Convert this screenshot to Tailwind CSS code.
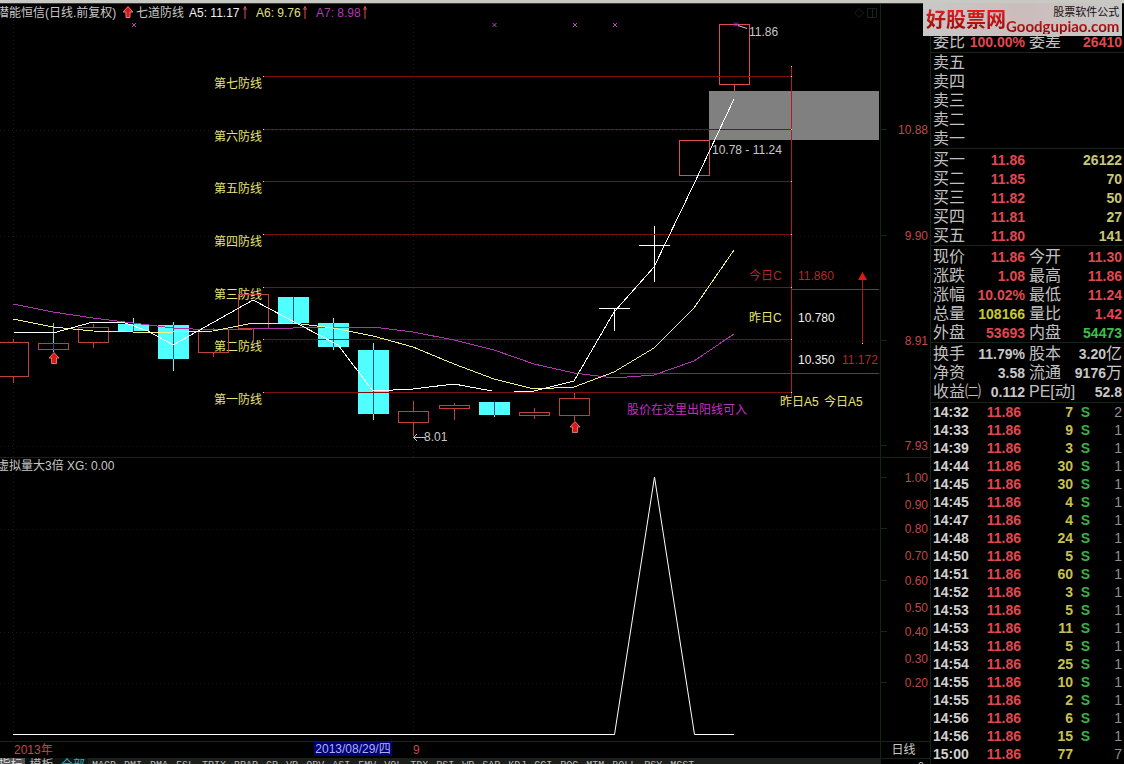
<!DOCTYPE html>
<html lang="zh-CN">
<head>
<meta charset="utf-8">
<meta name="viewport" content="width=device-width, initial-scale=1">
<title>潜能恒信 日线</title>
<script src="https://cdn.jsdelivr.net/npm/@tailwindcss/browser@4"></script>
</head>
<body class="flex h-screen flex-col overflow-hidden bg-black font-['Liberation_Sans','Noto_Sans_CJK_SC',sans-serif] text-xs text-[#c8c8c8]">
<div class="h-1 shrink-0 border-b border-[#3c3c3c] bg-[#c9c9c4]"></div>

<div class="relative flex min-h-0 flex-1">
  <main class="flex min-w-0 flex-1 flex-col">

    <!-- Price chart -->
    <section class="flex border-b border-[#142514]" aria-label="日线">
      <div class="min-w-0 flex-1">
        <header class="flex h-4 items-center whitespace-nowrap leading-4">
          <h1 class="-ml-[3px] w-[125px] pt-0.5">潜能恒信(日线.前复权)</h1>
          <svg class="h-3 w-3" viewBox="0 0 12 12" aria-hidden="true"><path d="M6 .5 11 6H8v5.500H4V6H1z" fill="#d81818" stroke="#e08080" stroke-width="1"/></svg>
          <span class="ml-0.5 w-[53px] pt-0.5">七道防线</span>
          <span class="w-[53px] pt-0.5 text-[#f0f0f0]">A5: 11.17</span>
          <svg class="mr-2 h-4 w-1.5" viewBox="0 0 6 16" aria-hidden="true"><path d="M3 2v13M1 5h4M2 3.500h2" stroke="#d85050" fill="none"/></svg>
          <span class="w-[46px] pt-0.5 text-[#e0e080]">A6: 9.76</span>
          <svg class="mr-2 h-4 w-1.5" viewBox="0 0 6 16" aria-hidden="true"><path d="M3 2v13M1 5h4M2 3.500h2" stroke="#d85050" fill="none"/></svg>
          <span class="w-[46px] pt-0.5 text-[#b03cb0]">A7: 8.98</span>
          <svg class="h-4 w-1.5" viewBox="0 0 6 16" aria-hidden="true"><path d="M3 2v13M1 5h4M2 3.500h2" stroke="#d85050" fill="none"/></svg>
          <svg class="mr-0.5 ml-auto h-4 w-6" viewBox="0 0 24 16" fill="none" stroke="#12261a" aria-hidden="true"><path d="M5 4.500 9.500 9 5 13.500.500 9zM13.500 4.500h9v9h-9zM18.500 4.500v9"/></svg>
        </header>
        <svg class="block h-auto w-full" viewBox="0 20 880 437" font-size="12" role="img" aria-label="K线图">
          <g stroke="#151b15" stroke-dasharray="1 3" shape-rendering="crispEdges">
            <path d="M13.500 20V457M413.500 20V457M0 130.500H880M0 236.500H880M0 341.500H880M0 446.500H880"/>
          </g>
          <rect x="709" y="91" width="170" height="49" fill="#808080"/>
          <g fill="#e8e478">
            <text x="214" y="88">第七防线</text>
            <text x="214" y="141">第六防线</text>
            <text x="214" y="193">第五防线</text>
            <text x="214" y="246">第四防线</text>
            <text x="214" y="299">第三防线</text>
            <text x="214" y="351">第二防线</text>
            <text x="214" y="404">第一防线</text>
          </g>
          <!-- Solid falling candles -->
          <g fill="#50ffff">
            <path d="M118 324h31v7h-31zM158 325h31v34h-31zM278 297h31v26h-31zM318 323h31v24h-31zM358 350h31v64h-31zM479 402h31v13h-31z"/>
            <path d="M133 318h1v6h-1zM173 322h1v49h-1zM293 323h1v1h-1zM333 318h1v32h-1zM373 343h1v77h-1zM494 402h1v15h-1z"/>
          </g>
          <g fill="#164a9c"><path d="M133 324h1v7h-1zM173 325h1v34h-1zM293 297h1v26h-1zM333 323h1v24h-1zM373 350h1v64h-1zM494 402h1v13h-1z"/></g>
          <!-- Hollow rising candles -->
          <g fill="none" stroke="#c04040" shape-rendering="crispEdges">
            <path d="M-1.500 342.500h30v34h-30zM38.500 343.500h30v6h-30zM78.500 327.500h30v15h-30zM198.500 329.500h30v23h-30zM238.500 294.500h30v34h-30zM398.500 411.500h30v11h-30zM439.500 405.500h30v3h-30zM519.500 412.500h30v3h-30zM559.500 398.500h30v17h-30z"/>
            <path d="M13.500 339v3M13.500 376v7M93.500 324v3M93.500 342v6M213.500 328v2M213.500 352v5M253.500 328v14M413.500 401v10M413.500 422v14M454.500 403v2M454.500 408v12M534.500 408v4M534.500 415v4M574.500 393v5M574.500 415v6"/>
          </g>
          <path d="M53.500 323v20M53.500 349v3" stroke="#60d8c0" shape-rendering="crispEdges"/>
          <path d="M53.500 343v7" stroke="#3838a0" shape-rendering="crispEdges"/>
          <g fill="none" stroke="#e04c4c" shape-rendering="crispEdges"><path d="M679.500 140.500h30v35h-30zM719.500 24.500h30v60h-30zM734.500 84v7"/></g>
          <path d="M599 308.500h31M614.500 308v23M639 245.500h31M654.500 226v56" stroke="#fff" shape-rendering="crispEdges"/>
          <!-- Defence lines -->
          <g stroke="#7c1010" shape-rendering="crispEdges">
            <path d="M263 76.500H791M263 129.500H791M263 181.500H791M263 234.500H791M263 287.500H791M263 339.500H791M263 392.500H791"/>
          </g>
          <path d="M791.500 66V398M791 289.500H879M620 373.500H879" stroke="#b41c1c" shape-rendering="crispEdges"/>
          <path d="M791 66h1v1h-1zM791 76h1v1h-1zM791 129h1v1h-1zM791 181h1v1h-1zM791 234h1v1h-1zM791 287h1v1h-1zM791 339h1v1h-1zM791 392h1v1h-1zM263 76h1v1h-1zM263 129h1v1h-1zM263 181h1v1h-1zM263 234h1v1h-1zM263 287h1v1h-1zM263 339h1v1h-1zM263 392h1v1h-1zM862 343h1v1h-1z" fill="#e8e0b0"/>
          <path d="M862.500 280V343" stroke="#b01818" shape-rendering="crispEdges"/>
          <path d="M862.500 272 867 280h-9z" fill="#e01818"/>
          <!-- Moving averages -->
          <g fill="none" stroke-width="1" shape-rendering="crispEdges">
            <path stroke="#b034b0" d="M13 304 53 312 93 318 133 323 173 328 213 330 253 329 333 327 373 327 413 332 454 340 494 350 534 364 574 373 614 378 654 375 694 361 734 334"/>
            <path stroke="#f0f090" d="M13 319 53 327 93 331 133 332 173 332 213 331 253 323 293 323 333 328 373 336 413 347 454 364 494 379 534 389 574 387 614 372 654 348 694 308 734 250"/>
            <path stroke="#fff" d="M13 332 53 333 93 322 125 323 148 331 173 345 253 300 300 325 338 345 373 391 413 389 454 384 492 391M514 391 534 391 574 381 614 312 654 267 694 184 734 99"/>
          </g>
          <!-- Buy arrows -->
          <g fill="#e01818" stroke="#e89090" stroke-width=".8">
            <path d="M54 352.500 59 358H56.500V363.500H51.500V358H49z"/>
            <path d="M575 421.500 580 427H577.500V432.500H572.500V427H570z"/>
          </g>
          <path d="M132 23l4 4m0-4l-4 4M492.500 23l4 4m0-4l-4 4M573 23l4 4m0-4l-4 4M613 23l4 4m0-4l-4 4M734 22.500l4 4m0-4l-4 4M733 24.500h6" stroke="#b848b8" fill="none"/>
          <path d="M738 25.500 747 28.500M425 437.500H413.500M417 434l-3.500 3.500 3.500 3.500" stroke="#c8c8c8" fill="none"/>
          <g fill="#c8c8c8">
            <text x="749" y="36">11.86</text>
            <text x="712" y="154">10.78 - 11.24</text>
            <text x="424" y="441">8.01</text>
          </g>
          <text x="749" y="280" fill="#b02828">今日C</text>
          <text x="798" y="280" fill="#b02828">11.860</text>
          <text x="749" y="322" fill="#e8e478">昨日C</text>
          <text x="798" y="322" fill="#f0f0f0">10.780</text>
          <text x="798" y="364" fill="#f0f0f0">10.350</text>
          <text x="842" y="364" fill="#b02828">11.172</text>
          <text x="780" y="406" fill="#e8e478">昨日A5</text>
          <text x="824" y="406" fill="#e8e478">今日A5</text>
          <text x="627" y="414" fill="#c030c0">股价在这里出阳线可入</text>
        </svg>
      </div>
      <div class="w-[50px] shrink-0 border-l border-[#142514]">
        <svg class="block w-full" viewBox="0 4 49 453" font-size="12" fill="#c04848" text-anchor="end" aria-label="价格">
          <path d="M0 129.500h6M0 235.500h6M0 340.500h6M0 445.500h6" stroke="#142514"/>
          <text x="47" y="134">10.88</text>
          <text x="47" y="240">9.90</text>
          <text x="47" y="345">8.91</text>
          <text x="47" y="450">7.93</text>
        </svg>
      </div>
    </section>

    <!-- Indicator chart -->
    <section class="flex" aria-label="虚拟量大3倍">
      <div class="min-w-0 flex-1">
        <h2 class="-ml-[3px] h-4 whitespace-nowrap leading-4">虚拟量大3倍 XG: 0.00</h2>
        <svg class="block h-auto w-full" viewBox="0 474 880 267" role="img" aria-label="XG">
          <path d="M13.500 474V741M413.500 474V741M0 529.500H880M0 632.500H880M0 683.500H880" stroke="#151b15" stroke-dasharray="1 3" shape-rendering="crispEdges"/>
          <path d="M13 734.500H614.500L654.500 477 694.500 734.500H734" fill="none" stroke="#fff"/>
        </svg>
      </div>
      <div class="w-[50px] shrink-0 border-l border-[#142514]">
        <svg class="block w-full" viewBox="0 458 49 283" font-size="12" fill="#c04848" text-anchor="end" aria-label="XG">
          <path d="M0 477.500h6M0 528.500h6M0 580.500h6M0 631.500h6M0 682.500h6" stroke="#142514"/>
          <text x="47" y="482">1.00</text>
          <text x="47" y="509">0.90</text>
          <text x="47" y="533">0.80</text>
          <text x="47" y="560">0.70</text>
          <text x="47" y="585">0.60</text>
          <text x="47" y="612">0.50</text>
          <text x="47" y="636">0.40</text>
          <text x="47" y="663">0.30</text>
          <text x="47" y="687">0.20</text>
        </svg>
      </div>
    </section>

    <!-- Date axis -->
    <div class="flex h-[17px] shrink-0 border-t border-[#142514] leading-4 whitespace-nowrap">
      <div class="flex min-w-0 flex-1 text-[#c04848]">
        <span class="ml-3.5 w-[300px]">2013年</span>
        <span class="h-3.5 w-[78px] bg-[#00007c] text-center leading-3.5 text-[#b0b0e8]">2013/08/29/四</span>
        <span class="ml-[21px]">9</span>
      </div>
      <div class="w-[50px] shrink-0 border-l border-[#142514] pr-1 text-center">日线</div>
    </div>

    <!-- Indicator tabs -->
    <nav class="flex min-h-0 flex-1 overflow-hidden font-['Liberation_Mono','Noto_Sans_CJK_SC',monospace] whitespace-nowrap">
      <div class="flex min-w-0 flex-1 items-start overflow-hidden bg-[#1c1f1c] text-[10px] leading-4 text-[#b8b8b8]">
        <button class="-ml-1 h-4 w-[29px] bg-[#555] text-xs leading-4 text-[#ddd]">指标</button>
        <button class="h-4 w-[33px] bg-[#101210] text-xs leading-4">模板</button>
        <button class="h-4 w-[30px] bg-[#0c1414] text-xs leading-4 text-[#38b0b0]">全部</button>
        <button class="px-1">MACD</button><button class="px-1">DMI</button><button class="px-1">DMA</button><button class="px-1">FSL</button><button class="px-1">TRIX</button><button class="px-1">BRAR</button><button class="px-1">CR</button><button class="px-1">VR</button><button class="px-1">OBV</button><button class="px-1">ASI</button><button class="px-1">EMV</button><button class="px-1">VOL</button><button class="px-1">TDX</button><button class="px-1">RSI</button><button class="px-1">WR</button><button class="px-1">SAR</button><button class="px-1">KDJ</button><button class="px-1">CCI</button><button class="px-1">ROC</button><button class="px-1">MTM</button><button class="px-1">BOLL</button><button class="px-1">PSY</button><button class="px-1">MCST</button>
      </div>
      <div class="flex w-[50px] shrink-0 items-start justify-between border-t border-l border-[#142514] px-1.5 text-[10px] leading-4">
        <button>-</button><button>9</button>
      </div>
    </nav>
  </main>

  <!-- Quote panel -->
  <aside class="w-[194px] shrink-0 overflow-hidden border-l border-[#142514] pt-7 text-sm font-bold whitespace-nowrap">
    <div class="pb-px">
      <table class="w-full table-fixed" aria-label="委比">
        <colgroup><col class="w-[35px]"><col class="w-[61px]"><col class="w-[35px]"><col></colgroup>
        <tbody id="ratio"></tbody>
      </table>
    </div>
    <div class="border-t border-[#142514]">
      <table class="w-full table-fixed" aria-label="卖盘">
        <colgroup><col class="w-[35px]"><col class="w-[61px]"><col class="w-[35px]"><col></colgroup>
        <tbody id="asks"></tbody>
      </table>
    </div>
    <div class="border-t border-[#142514] pt-px">
      <table class="w-full table-fixed" aria-label="买盘">
        <colgroup><col class="w-[35px]"><col class="w-[61px]"><col class="w-[35px]"><col></colgroup>
        <tbody id="bids"></tbody>
      </table>
    </div>
    <div class="border-t border-[#142514] pt-px">
      <table class="w-full table-fixed" aria-label="行情">
        <colgroup><col class="w-[35px]"><col class="w-[61px]"><col class="w-[35px]"><col></colgroup>
        <tbody id="quote"></tbody>
      </table>
    </div>
    <div class="border-t border-[#142514] py-px">
      <table class="w-full table-fixed" aria-label="基本面">
        <colgroup><col class="w-[35px]"><col class="w-[61px]"><col class="w-[35px]"><col></colgroup>
        <tbody id="basics"></tbody>
      </table>
    </div>
    <div class="border-t border-[#142514]">
      <table class="w-full table-fixed" aria-label="成交明细">
        <colgroup><col class="w-[43px]"><col class="w-[47px]"><col class="w-[52px]"><col class="w-[17px]"><col></colgroup>
        <tbody id="ticks"></tbody>
      </table>
    </div>
  </aside>

  <!-- Site banner -->
  <a href="#" class="absolute -top-px right-0.5 flex h-[33px] w-[199px] items-center justify-between overflow-hidden bg-linear-to-r from-[#c8c8c8] via-[#ccbcbc] to-[#c8c8c8] px-[3px] whitespace-nowrap">
    <span class="bg-linear-to-b from-[#f02020] to-[#900808] bg-clip-text text-xl leading-6 font-bold text-transparent">好股票网</span>
    <span class="flex flex-col items-end">
      <span class="text-[11px] leading-3 text-[#181010]">股票软件公式</span>
      <span class="bg-linear-to-b from-[#d82020] to-[#800808] bg-clip-text font-['Lato',sans-serif] text-[15px] leading-4 font-bold text-transparent">Goodgupiao.com</span>
    </span>
  </a>
</div>

<script>
const R = 'text-[#e04850]', W = 'text-[#c8c8c8]', Y = 'text-[#c8c878]', Y2 = 'text-[#c8c832]', G = 'text-[#38c048]';
const label = t => `<th scope="row" class="p-0 pl-0.5 text-left align-middle text-base leading-4 font-normal text-[#c0c0c0]">${t}</th>`;
const value = (t, c) => `<td class="p-0 pr-0.5 text-right align-middle leading-4 ${c || ''}">${t}</td>`;
const cjk = t => `<span class="text-base leading-4 font-normal">${t}</span>`;
const rows = (id, list) => {
  document.getElementById(id).innerHTML = list.map(r =>
    `<tr class="h-[19px]">${label(r[0])}${value(r[1], r[2])}${r[3] ? label(r[3]) : '<td></td>'}${value(r[4], r[5])}</tr>`).join('');
};
rows('ratio', [['委比', '100.00%', R, '委差', '26410', R]]);
rows('asks', ['五', '四', '三', '二', '一'].map(n => ['卖' + n, '', '', '', '', '']));
rows('bids', [['一', '11.86', '26122'], ['二', '11.85', '70'], ['三', '11.82', '50'], ['四', '11.81', '27'], ['五', '11.80', '141']]
  .map(b => ['买' + b[0], b[1], R, '', b[2], Y]));
rows('quote', [
  ['现价', '11.86', R, '今开', '11.30', R],
  ['涨跌', '1.08', R, '最高', '11.86', R],
  ['涨幅', '10.02%', R, '最低', '11.24', R],
  ['总量', '108166', Y2, '量比', '1.42', R],
  ['外盘', '53693', R, '内盘', '54473', G]]);
rows('basics', [
  ['换手', '11.79%', W, '股本', '3.20' + cjk('亿'), W],
  ['净资', '3.58', W, '流通', '9176' + cjk('万'), W],
  ['收益㈡', '0.112', W, 'PE[动]', '52.8', W]]);
document.getElementById('ticks').innerHTML = [
  ['14:32', 7, 2], ['14:33', 9, 1], ['14:39', 3, 1], ['14:44', 30, 1], ['14:45', 30, 1], ['14:45', 4, 1], ['14:47', 4, 1],
  ['14:48', 24, 1], ['14:50', 5, 1], ['14:51', 60, 1], ['14:52', 3, 1], ['14:53', 5, 1], ['14:53', 11, 1], ['14:53', 5, 1],
  ['14:54', 25, 1], ['14:55', 10, 1], ['14:55', 2, 1], ['14:56', 6, 1], ['14:56', 15, 1], ['15:00', 77, 7]
].map(t => `<tr class="h-[18px]"><td class="p-0 pl-0.5 align-middle leading-4 text-[#d0d0d0]">${t[0]}</td>
  <td class="p-0 text-right align-middle leading-4 text-[#e04850]">11.86</td>
  <td class="p-0 text-right align-middle leading-4 text-[#c8c050]">${t[1]}</td>
  <td class="p-0 text-right align-middle leading-4 text-[#38b048]">${t[0] === '15:00' ? '' : 'S'}</td>
  <td class="p-0 pr-0.5 text-right align-middle leading-4 font-normal text-[#909090]">${t[2]}</td></tr>`).join('');
</script>
</body>
</html>
